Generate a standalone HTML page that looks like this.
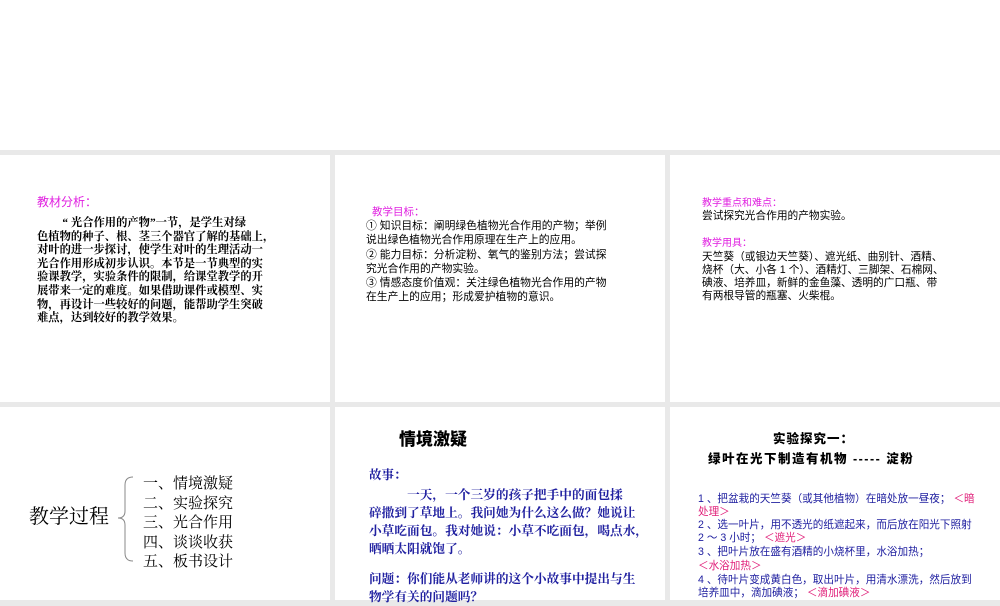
<!DOCTYPE html>
<html><head><meta charset="utf-8"><style>
body{margin:0;width:1000px;height:600px;background:#e9e9e9;position:relative;overflow:hidden;font-family:"Liberation Sans","Noto Sans CJK SC",sans-serif;}
.p{position:absolute;background:#fff;overflow:hidden}
.t{position:absolute;white-space:nowrap;font-family:"Liberation Serif","Noto Serif CJK SC",serif;line-height:1.2}
.s{font-family:"Liberation Sans","Noto Sans CJK SC",sans-serif;}
.m{color:#e020e0}
.b{color:#2020a0}
.r{color:#e0207a}
</style></head><body>
<div class="p" style="left:0;top:0;width:1000px;height:150px"></div>
<div class="p" style="left:0;top:155px;width:330px;height:247px"></div>
<div class="p" style="left:335px;top:155px;width:330px;height:247px"></div>
<div class="p" style="left:670px;top:155px;width:330px;height:247px"></div>
<div class="p" style="left:0;top:407px;width:330px;height:193px"></div>
<div class="p" style="left:335px;top:407px;width:330px;height:193px"></div>
<div class="p" style="left:670px;top:407px;width:330px;height:193px"></div>

<div class="t m s" style="left:37px;top:195px;font-size:12px">教材分析：</div>
<div class="t" style="left:37px;top:217px;font-size:11.3px;line-height:13.6px;font-weight:bold">&nbsp;&nbsp;&nbsp;&nbsp;&nbsp;&nbsp;&nbsp;&nbsp;&nbsp;“ 光合作用的产物”一节，是学生对绿<br>色植物的种子、根、茎三个器官了解的基础上，<br>对叶的进一步探讨，使学生对叶的生理活动一<br>光合作用形成初步认识。本节是一节典型的实<br>验课教学，实验条件的限制，给课堂教学的开<br>展带来一定的难度。如果借助课件或模型、实<br>物，再设计一些较好的问题，能帮助学生突破<br>难点，达到较好的教学效果。</div>

<div class="t m s" style="left:372px;top:206px;font-size:10.5px">教学目标：</div>
<div class="t s" style="left:366px;top:219px;font-size:10.8px;line-height:14.3px">① 知识目标：阐明绿色植物光合作用的产物；举例<br>说出绿色植物光合作用原理在生产上的应用。<br>② 能力目标：分析淀粉、氧气的鉴别方法；尝试探<br>究光合作用的产物实验。<br>③ 情感态度价值观：关注绿色植物光合作用的产物<br>在生产上的应用；形成爱护植物的意识。</div>

<div class="t m s" style="left:702px;top:198px;font-size:10px;line-height:12px">教学重点和难点：</div>
<div class="t s" style="left:702px;top:210px;font-size:10.7px;line-height:13px">尝试探究光合作用的产物实验。</div>
<div class="t m s" style="left:702px;top:238px;font-size:10px;line-height:12px">教学用具：</div>
<div class="t s" style="left:702px;top:251px;font-size:10.7px;line-height:13px">天竺葵（或银边天竺葵）、遮光纸、曲别针、酒精、<br>烧杯（大、小各 1 个）、酒精灯、三脚架、石棉网、<br>碘液、培养皿，新鲜的金鱼藻、透明的广口瓶、带<br>有两根导管的瓶塞、火柴棍。</div>

<div class="t" style="left:29px;top:505px;font-size:20px">教学过程</div>
<svg style="position:absolute;left:115px;top:475px" width="22" height="90"><path d="M18 2 Q10 2 10 10 L10 36 Q10 43 3 43 Q10 43 10 50 L10 78 Q10 86 18 86" fill="none" stroke="#888" stroke-width="1"/></svg>
<div class="t" style="left:143px;top:475px;font-size:15px;line-height:19.5px">一、情境激疑<br>二、实验探究<br>三、光合作用<br>四、谈谈收获<br>五、板书设计</div>

<div class="t s" style="left:399px;top:430px;font-size:17px;font-weight:900">情境激疑</div>
<div class="t b" style="left:369px;top:468px;font-size:12.5px;font-weight:bold">故事：</div>
<div class="t b" style="left:369px;top:486px;font-size:12.7px;line-height:18px;font-weight:bold">&nbsp;&nbsp;&nbsp;&nbsp;&nbsp;&nbsp;&nbsp;&nbsp;&nbsp;&nbsp;&nbsp;&nbsp;一天，一个三岁的孩子把手中的面包揉<br>碎撒到了草地上。我问她为什么这么做？她说让<br>小草吃面包。我对她说：小草不吃面包，喝点水，<br>晒晒太阳就饱了。</div>
<div class="t b" style="left:369px;top:570px;font-size:12.7px;line-height:18px;font-weight:bold">问题：你们能从老师讲的这个小故事中提出与生<br>物学有关的问题吗？</div>

<div class="t s" style="left:773px;top:432px;font-size:12.5px;font-weight:900;letter-spacing:1px">实验探究一：</div>
<div class="t s" style="left:708px;top:452px;font-size:12.5px;font-weight:900;letter-spacing:1.5px">绿叶在光下制造有机物 ----- 淀粉</div>
<div class="t b s" style="left:698px;top:493px;font-size:10.6px;line-height:12.5px">1 、把盆栽的天竺葵（或其他植物）在暗处放一昼夜； <span class="r">＜暗<br>处理＞</span></div>
<div class="t b s" style="left:698px;top:519px;font-size:10.6px;line-height:12.5px">2 、选一叶片，用不透光的纸遮起来，而后放在阳光下照射<br>2 ～ 3 小时； <span class="r">＜遮光＞</span></div>
<div class="t b s" style="left:698px;top:546px;font-size:10.6px">3 、把叶片放在盛有酒精的小烧杯里，水浴加热；</div>
<div class="t r s" style="left:698px;top:560px;font-size:10.6px">＜水浴加热＞</div>
<div class="t b s" style="left:698px;top:574px;font-size:10.6px;line-height:12.5px">4 、待叶片变成黄白色，取出叶片，用清水漂洗，然后放到<br>培养皿中，滴加碘液； <span class="r">＜滴加碘液＞</span></div>
</body></html>
